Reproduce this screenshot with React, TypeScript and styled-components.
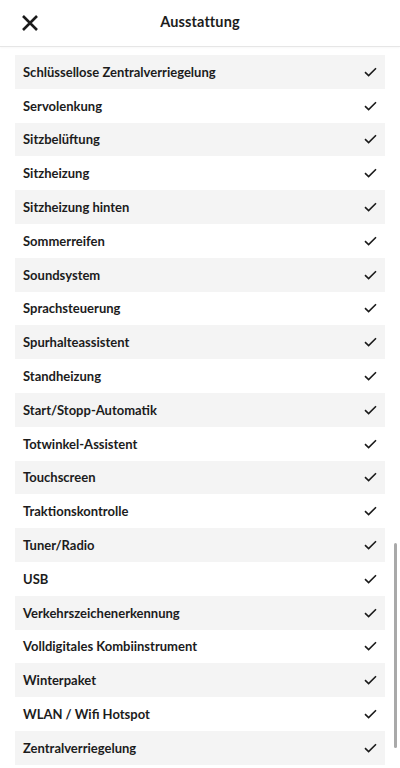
import styled, { createGlobalStyle } from 'styled-components';

const features = [
  'Schlüssellose Zentralverriegelung',
  'Servolenkung',
  'Sitzbelüftung',
  'Sitzheizung',
  'Sitzheizung hinten',
  'Sommerreifen',
  'Soundsystem',
  'Sprachsteuerung',
  'Spurhalteassistent',
  'Standheizung',
  'Start/Stopp-Automatik',
  'Totwinkel-Assistent',
  'Touchscreen',
  'Traktionskontrolle',
  'Tuner/Radio',
  'USB',
  'Verkehrszeichenerkennung',
  'Volldigitales Kombiinstrument',
  'Winterpaket',
  'WLAN / Wifi Hotspot',
  'Zentralverriegelung',
];

const GlobalStyle = createGlobalStyle`
  html, body {
    margin: 0;
    padding: 0;
    background: #ffffff;
    font-family: Lato, "Noto Sans", sans-serif;
    color: #1c1c1c;
  }
`;

const Screen = styled.div`
  position: relative;
  width: 400px;
  height: 768px;
  overflow: hidden;
  background: #fff;
`;

const Header = styled.header`
  height: 46px;
  display: grid;
  grid-template-columns: 60px 1fr 60px;
  align-items: center;
  border-bottom: 1px solid #e6e6e6;
  box-shadow: 0 1px 2px rgba(0, 0, 0, 0.03);
`;

const CloseButton = styled.button`
  border: 0;
  background: none;
  padding: 0 0 0 21px;
  height: 46px;
  display: flex;
  align-items: center;
  cursor: pointer;
`;

const Title = styled.h1`
  margin: 0;
  text-align: center;
  font-size: 14.5px;
  font-weight: 700;
  letter-spacing: 0.1px;
  padding-bottom: 4px;
`;

const List = styled.ul`
  list-style: none;
  margin: 0;
  padding: 8px 15px 0;
`;

const Row = styled.li<{ $shaded: boolean }>`
  height: 33.8px;
  display: flex;
  align-items: center;
  justify-content: space-between;
  padding: 0 8px;
  background: ${(p) => (p.$shaded ? '#f4f4f4' : '#ffffff')};
  font-size: 13px;
  font-weight: 700;
`;

const Scrollbar = styled.div`
  position: absolute;
  right: 3px;
  top: 543px;
  width: 3px;
  height: 205px;
  border-radius: 2px;
  background: #a9a9a9;
`;

const Check = () => (
  <svg width="13" height="10" viewBox="0 0 13 10" fill="none">
    <path d="M1 5.2 L4.6 8.6 L12 1.2" stroke="#1a1a1a" strokeWidth="1.6" />
  </svg>
);

export default function App() {
  return (
    <Screen>
      <GlobalStyle />
      <Header>
        <CloseButton aria-label="Schließen">
          <svg width="18" height="18" viewBox="0 0 18 18">
            <path d="M2 2 L16 16 M16 2 L2 16" stroke="#1a1a1a" strokeWidth="2.6" />
          </svg>
        </CloseButton>
        <Title>Ausstattung</Title>
        <span />
      </Header>
      <List>
        {features.map((name, idx) => (
          <Row key={name} $shaded={idx % 2 === 0}>
            <span>{name}</span>
            <Check />
          </Row>
        ))}
      </List>
      <Scrollbar />
    </Screen>
  );
}
